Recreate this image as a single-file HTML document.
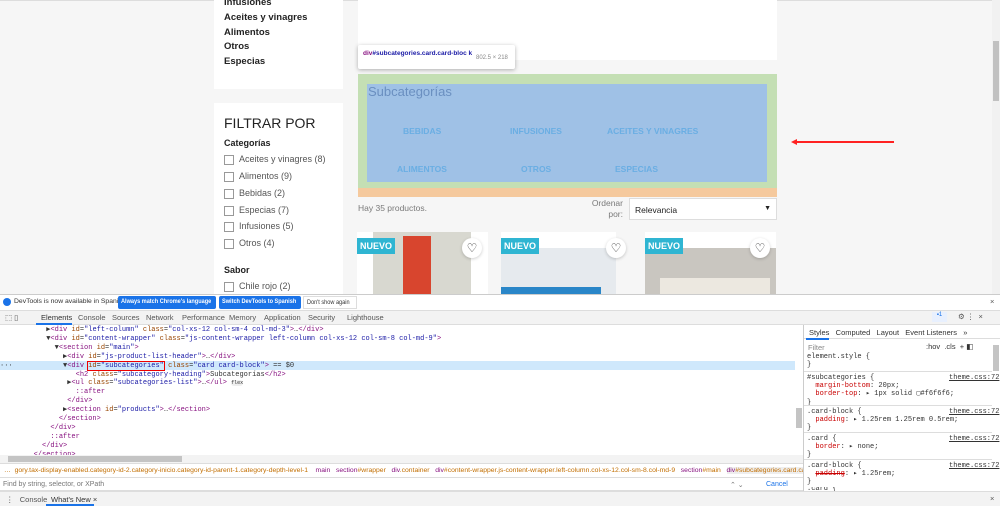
<!DOCTYPE html>
<html><head><meta charset="utf-8"><style>
*{box-sizing:border-box;margin:0;padding:0}
body{width:1000px;height:506px;overflow:hidden;background:#f6f6f6;font-family:"Liberation Sans",sans-serif;position:relative}
.a{position:absolute;white-space:nowrap}
.lc{font-size:9.5px;color:#232323;font-weight:bold}
.cb{font-size:9px;color:#555}
.box{width:10px;height:10px;border:1px solid #999;background:#fff;display:inline-block;vertical-align:middle;margin-right:5px}
.sub{color:#6aaee3;font-weight:bold;font-size:8.5px}
.mono{font-family:"Liberation Mono",monospace;font-size:7px;white-space:pre}
.tag{color:#881280}.at{color:#994500}.av{color:#1a1aa6}
.tab{font-size:7.5px;color:#555}
.nuevo{background:#2fb5d2;color:#fff;font-weight:bold;font-size:9px;padding:3px 3px}
.heart{width:20px;height:20px;border-radius:50%;background:#fff;box-shadow:0 1px 3px rgba(0,0,0,.2);font-size:12px;text-align:center;line-height:20px;color:#333}
.btn{height:13px;background:#1a73e8;color:#fff;font-size:6.8px;font-weight:bold;padding:2px 3px;white-space:nowrap;overflow:hidden;border-radius:2px}
.btn span,.sq{display:inline-block;transform:scaleX(.82);transform-origin:left}
</style></head><body>
<div class="a" style="left:0;top:0;width:1000px;height:1px;background:#ddd"></div>
<div class="a" style="left:214px;top:0;width:129px;height:89px;background:#fff"></div>
<div class="a lc" style="left:224px;top:-3px">Infusiones</div>
<div class="a lc" style="left:224px;top:12px">Aceites y vinagres</div>
<div class="a lc" style="left:224px;top:27px">Alimentos</div>
<div class="a lc" style="left:224px;top:41px">Otros</div>
<div class="a lc" style="left:224px;top:56px">Especias</div>
<div class="a" style="left:214px;top:103px;width:129px;height:192px;background:#fff"></div>
<div class="a" style="left:224px;top:115px;font-size:14px;color:#232323">FILTRAR POR</div>
<div class="a lc" style="left:224px;top:138px;font-size:9px">Categorías</div>
<div class="a cb" style="left:224px;top:154px"><span class="box"></span>Aceites y vinagres (8)</div>
<div class="a cb" style="left:224px;top:171px"><span class="box"></span>Alimentos (9)</div>
<div class="a cb" style="left:224px;top:188px"><span class="box"></span>Bebidas (2)</div>
<div class="a cb" style="left:224px;top:205px"><span class="box"></span>Especias (7)</div>
<div class="a cb" style="left:224px;top:221px"><span class="box"></span>Infusiones (5)</div>
<div class="a cb" style="left:224px;top:238px"><span class="box"></span>Otros (4)</div>
<div class="a lc" style="left:224px;top:265px;font-size:9px">Sabor</div>
<div class="a cb" style="left:224px;top:281px"><span class="box"></span>Chile rojo (2)</div>
<div class="a" style="left:358px;top:0;width:419px;height:60px;background:#fff"></div>
<div class="a" style="left:358px;top:74px;width:419px;height:114px;background:#c4dfb4"></div>
<div class="a" style="left:367px;top:84px;width:400px;height:98px;background:#9fc1e6"></div>
<div class="a" style="left:358px;top:188px;width:419px;height:9px;background:#f5c99d"></div>
<div class="a" style="left:368px;top:84px;font-size:13px;color:#6a8fc0">Subcategorías</div>
<div class="a sub" style="left:403px;top:126px">BEBIDAS</div>
<div class="a sub" style="left:510px;top:126px">INFUSIONES</div>
<div class="a sub" style="left:607px;top:126px">ACEITES Y VINAGRES</div>
<div class="a sub" style="left:397px;top:164px">ALIMENTOS</div>
<div class="a sub" style="left:521px;top:164px">OTROS</div>
<div class="a sub" style="left:615px;top:164px">ESPECIAS</div>
<div class="a" style="left:358px;top:45px;width:157px;height:24px;background:#fff;box-shadow:0 1px 4px rgba(0,0,0,.3);border-radius:2px"></div>
<div class="a" style="left:363px;top:49px;font-size:6.5px;color:#1a1aa6;font-weight:bold;width:110px;line-height:9px;white-space:normal"><span style="color:#881280">div</span>#subcategories.card.card-bloc k</div>
<div class="a" style="left:476px;top:55px;font-size:6px;color:#888">802.5 × 218</div>
<div class="a" style="left:358px;top:203px;font-size:8.5px;color:#7a7a7a">Hay 35 productos.</div>
<div class="a" style="left:590px;top:198px;font-size:8.5px;color:#7a7a7a;text-align:right;width:33px;line-height:11px;white-space:normal">Ordenar por:</div>
<div class="a" style="left:629px;top:198px;width:148px;height:22px;background:#fff;border:1px solid #ddd;font-size:8.5px;color:#232323;padding:6px 5px">Relevancia<span style="float:right;font-size:7px">▼</span></div>
<div class="a" style="left:357px;top:232px;width:131px;height:63px;background:#fff"></div>
<div class="a" style="left:373px;top:232px;width:98px;height:63px;background:#d8d8d0"></div>
<div class="a" style="left:403px;top:236px;width:28px;height:59px;background:#d8452e"></div>
<div class="a" style="left:501px;top:232px;width:115px;height:63px;background:#fff"></div>
<div class="a" style="left:501px;top:248px;width:115px;height:47px;background:#e6eaee"></div>
<div class="a" style="left:501px;top:287px;width:100px;height:8px;background:#2a86c8"></div>
<div class="a" style="left:645px;top:232px;width:131px;height:63px;background:#fff"></div>
<div class="a" style="left:645px;top:248px;width:131px;height:47px;background:#c9c6c0"></div>
<div class="a" style="left:660px;top:278px;width:110px;height:17px;background:#ece8e0"></div>
<div class="a nuevo" style="left:357px;top:238px">NUEVO</div>
<div class="a nuevo" style="left:501px;top:238px">NUEVO</div>
<div class="a nuevo" style="left:645px;top:238px">NUEVO</div>
<div class="a heart" style="left:462px;top:238px">♡</div>
<div class="a heart" style="left:606px;top:238px">♡</div>
<div class="a heart" style="left:750px;top:238px">♡</div>
<div class="a" style="left:796px;top:141px;width:98px;height:2px;background:#f22"></div>
<div class="a" style="left:791px;top:139px;width:0;height:0;border-top:3px solid transparent;border-bottom:3px solid transparent;border-right:6px solid #f22"></div>
<div class="a" style="left:992px;top:0;width:8px;height:295px;background:#f1f1f1"></div>
<div class="a" style="left:993px;top:41px;width:6px;height:60px;background:#c1c1c1"></div>
<!-- devtools -->
<div class="a" style="left:0;top:294px;width:1000px;height:212px;background:#fff;border-top:1px solid #ccc"></div>
<div class="a" style="left:3px;top:298px;width:8px;height:8px;border-radius:50%;background:#1a73e8"></div>
<div class="a" style="left:14px;top:298px;font-size:6.8px;color:#333">DevTools is now available in Spanish!</div>
<div class="a btn" style="left:118px;top:296px;width:98px"><span>Always match Chrome's language</span></div>
<div class="a btn" style="left:219px;top:296px;width:82px"><span>Switch DevTools to Spanish</span></div>
<div class="a" style="left:303px;top:296px;width:54px;height:13px;border:1px solid #ddd;color:#333;font-size:6.8px;padding:2px 3px;overflow:hidden"><span class="sq">Don't show again</span></div>
<div class="a tab" style="left:990px;top:297px">×</div>
<div class="a" style="left:0;top:310px;width:1000px;height:15px;background:#f3f3f3;border-top:1px solid #ddd;border-bottom:1px solid #ddd"></div>
<div class="a tab" style="left:5px;top:313px">⬚ ▯</div>
<div class="a tab" style="left:41px;top:313px;color:#333">Elements</div>
<div class="a" style="left:36px;top:323px;width:36px;height:2px;background:#1a73e8"></div>
<div class="a tab" style="left:78px;top:313px">Console</div>
<div class="a tab" style="left:112px;top:313px">Sources</div>
<div class="a tab" style="left:146px;top:313px">Network</div>
<div class="a tab" style="left:182px;top:313px">Performance</div>
<div class="a tab" style="left:229px;top:313px">Memory</div>
<div class="a tab" style="left:264px;top:313px">Application</div>
<div class="a tab" style="left:308px;top:313px">Security</div>
<div class="a tab" style="left:347px;top:313px">Lighthouse</div>
<div class="a" style="left:932px;top:312px;width:15px;height:10px;background:#e8f0fe;font-size:6px;color:#1a73e8;text-align:center">▪1</div>
<div class="a tab" style="left:958px;top:312px">⚙ ⋮ &nbsp;×</div>
<div class="a" style="left:0;top:361px;width:795px;height:9px;background:#cfe8fc"></div>
<div class="a mono" style="left:0;top:326px;line-height:8.9px;color:#333">           <span>▶</span><span class="tag">&lt;div</span> <span class="at">id</span>=<span class="av">"left-column"</span> <span class="at">class</span>=<span class="av">"col-xs-12 col-sm-4 col-md-3"</span><span class="tag">&gt;</span>…<span class="tag">&lt;/div&gt;</span>
           ▼<span class="tag">&lt;div</span> <span class="at">id</span>=<span class="av">"content-wrapper"</span> <span class="at">class</span>=<span class="av">"js-content-wrapper left-column col-xs-12 col-sm-8 col-md-9"</span><span class="tag">&gt;</span>
             ▼<span class="tag">&lt;section</span> <span class="at">id</span>=<span class="av">"main"</span><span class="tag">&gt;</span>
               ▶<span class="tag">&lt;div</span> <span class="at">id</span>=<span class="av">"js-product-list-header"</span><span class="tag">&gt;</span>…<span class="tag">&lt;/div&gt;</span>
···            ▼<span class="tag">&lt;div</span> <span style="outline:1px solid #e00"><span class="at">id</span>=<span class="av">"subcategories"</span></span> <span class="at">class</span>=<span class="av">"card card-block"</span><span class="tag">&gt;</span> == $0
                  <span class="tag">&lt;h2</span> <span class="at">class</span>=<span class="av">"subcategory-heading"</span><span class="tag">&gt;</span>Subcategorías<span class="tag">&lt;/h2&gt;</span>
                ▶<span class="tag">&lt;ul</span> <span class="at">class</span>=<span class="av">"subcategories-list"</span><span class="tag">&gt;</span>…<span class="tag">&lt;/ul&gt;</span> <span style="background:#eee;border-radius:4px;font-size:5px">flex</span>
                  <span class="tag">::after</span>
                <span class="tag">&lt;/div&gt;</span>
               ▶<span class="tag">&lt;section</span> <span class="at">id</span>=<span class="av">"products"</span><span class="tag">&gt;</span>…<span class="tag">&lt;/section&gt;</span>
              <span class="tag">&lt;/section&gt;</span>
            <span class="tag">&lt;/div&gt;</span>
            <span class="tag">::after</span>
          <span class="tag">&lt;/div&gt;</span>
        <span class="tag">&lt;/section&gt;</span></div>
<div class="a" style="left:0;top:455px;width:803px;height:8px;background:#f3f3f3"></div>
<div class="a" style="left:8px;top:456px;width:174px;height:6px;background:#c4c4c4"></div>
<div class="a" style="left:796px;top:408px;width:6px;height:20px;background:#c4c4c4"></div>
<div class="a" style="left:0;top:463px;width:803px;height:14px;background:#fff;border-top:1px solid #ddd;font-size:6.8px;color:#c26e00;padding:3px 4px;overflow:hidden">… &nbsp;gory.tax-display-enabled.category-id-2.category-inicio.category-id-parent-1.category-depth-level-1 &nbsp;&nbsp;&nbsp;<span class="tag">main</span> &nbsp;&nbsp;<span class="tag">section</span>#wrapper &nbsp;&nbsp;<span class="tag">div</span>.container &nbsp;&nbsp;<span class="tag">div</span>#content-wrapper.js-content-wrapper.left-column.col-xs-12.col-sm-8.col-md-9 &nbsp;&nbsp;<span class="tag">section</span>#main &nbsp;&nbsp;<span style="background:#eee;color:#881280">div</span><span style="background:#eee">#subcategories.card.card-block</span> …</div>
<div class="a" style="left:0;top:477px;width:803px;height:14px;border-top:1px solid #ddd;border-bottom:1px solid #ddd;font-size:7px;color:#777;padding:3px 3px">Find by string, selector, or XPath<span style="position:absolute;left:730px">⌃ ⌄</span><span style="position:absolute;left:766px;color:#1a73e8">Cancel</span></div>
<div class="a" style="left:0;top:491px;width:1000px;height:15px;background:#f3f3f3;border-top:1px solid #ddd"></div>
<div class="a tab" style="left:6px;top:495px">⋮ &nbsp;&nbsp;Console</div>
<div class="a tab" style="left:51px;top:495px;color:#333">What's New ×</div>
<div class="a" style="left:46px;top:504px;width:48px;height:2px;background:#1a73e8"></div>
<div class="a tab" style="left:990px;top:494px">×</div>
<div class="a" style="left:803px;top:325px;width:1px;height:166px;background:#ccc"></div>
<div class="a" style="left:804px;top:325px;width:196px;height:14px;border-bottom:1px solid #ddd"></div>
<div class="a tab" style="left:809px;top:328px;color:#333">Styles &nbsp;&nbsp;Computed &nbsp;&nbsp;Layout &nbsp;&nbsp;Event Listeners &nbsp;&nbsp;»</div>
<div class="a" style="left:806px;top:338px;width:23px;height:1.5px;background:#1a73e8"></div>
<div class="a tab" style="left:808px;top:343px;color:#888">Filter</div>
<div class="a tab" style="left:926px;top:342px;color:#333">:hov &nbsp;.cls &nbsp;+ ◧</div>
<div class="a mono" style="left:807px;top:353px;line-height:8.2px;color:#333">element.style {
}</div>
<div class="a" style="left:804px;top:371px;width:188px;height:1px;background:#ddd"></div>
<div class="a mono" style="left:807px;top:374px;line-height:8.2px;color:#333">#subcategories {
  <span style="color:#c80000">margin-bottom</span>: 20px;
  <span style="color:#c80000">border-top</span>: ▸ 1px solid ▢#f6f6f6;
}</div>
<div class="a" style="left:804px;top:405px;width:188px;height:1px;background:#ddd"></div>
<div class="a mono" style="left:807px;top:408px;line-height:8.2px;color:#333">.card-block {
  <span style="color:#c80000">padding</span>: ▸ 1.25rem 1.25rem 0.5rem;
}</div>
<div class="a" style="left:804px;top:432px;width:188px;height:1px;background:#ddd"></div>
<div class="a mono" style="left:807px;top:435px;line-height:8.2px;color:#333">.card {
  <span style="color:#c80000">border</span>: ▸ none;
}</div>
<div class="a" style="left:804px;top:459px;width:188px;height:1px;background:#ddd"></div>
<div class="a mono" style="left:807px;top:462px;line-height:8.2px;color:#333">.card-block {
  <s style="color:#c80000">padding</s>: ▸ 1.25rem;
}</div>
<div class="a mono" style="left:807px;top:487px;color:#333;line-height:4px;overflow:hidden;height:4px">.card {</div>
<div class="a mono" style="left:949px;top:374px;line-height:8px;color:#333;text-decoration:underline">theme.css:72</div>
<div class="a mono" style="left:949px;top:408px;color:#333;text-decoration:underline">theme.css:72</div>
<div class="a mono" style="left:949px;top:435px;color:#333;text-decoration:underline">theme.css:72</div>
<div class="a mono" style="left:949px;top:462px;color:#333;text-decoration:underline">theme.css:72</div>
<div class="a" style="left:993px;top:345px;width:6px;height:26px;background:#c4c4c4"></div>
</body></html>
